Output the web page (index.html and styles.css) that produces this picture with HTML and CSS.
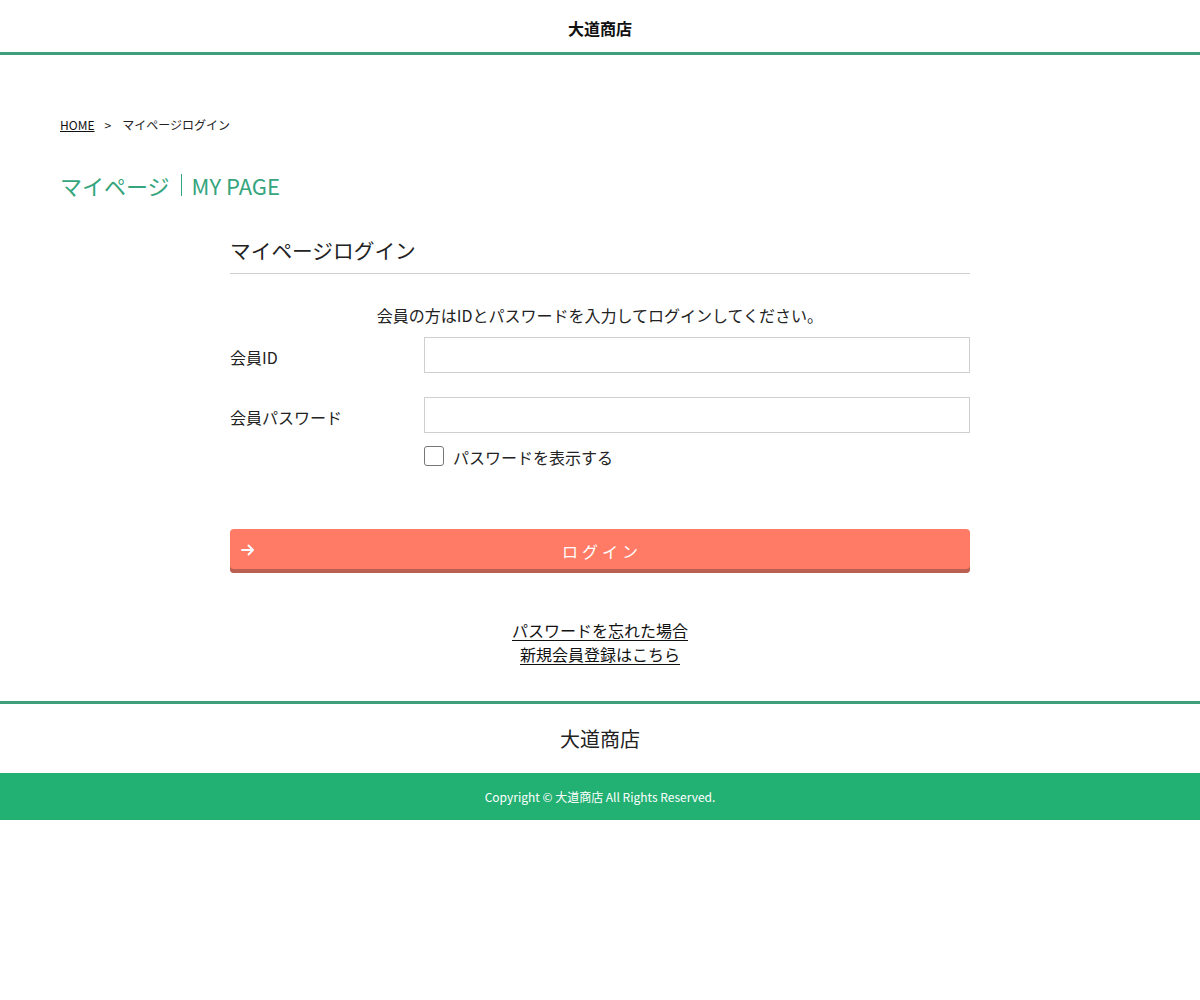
FILE: index.html
```html
<!DOCTYPE html>
<html lang="ja">
<head>
<meta charset="utf-8">
<title>マイページログイン | 大道商店</title>
<link rel="stylesheet" href="styles.css">
</head>
<body>
<header class="site-header">
  <div class="logo">大道商店</div>
</header>
<main class="main">
  <nav class="breadcrumb"><a href="#">HOME</a><span class="sep">&gt;</span><span>マイページログイン</span></nav>
  <h1 class="page-title"><span class="jp">マイページ</span><span class="bar"></span><span class="en">MY PAGE</span></h1>
  <section class="login">
    <h2 class="login-title">マイページログイン</h2>
    <p class="intro">会員の方はIDとパスワードを入力してログインしてください。</p>
    <div class="row">
      <label class="label">会員ID</label>
      <input class="field" type="text">
    </div>
    <div class="row">
      <label class="label">会員パスワード</label>
      <input class="field" type="password">
    </div>
    <div class="check-row">
      <span class="check"></span>
      <span class="check-text">パスワードを表示する</span>
    </div>
    <button class="btn" type="button">
      <svg class="arrow" width="14" height="14" viewBox="0 0 14 14"><path d="M1 7H12M7.5 2.5L12 7L7.5 11.5" fill="none" stroke="#fff" stroke-width="2" stroke-linecap="round" stroke-linejoin="round"/></svg>
      <span class="btn-text">ログイン</span>
    </button>
    <div class="links">
      <a href="#">パスワードを忘れた場合</a>
      <a href="#">新規会員登録はこちら</a>
    </div>
  </section>
</main>
<footer class="site-footer">
  <div class="footer-name">大道商店</div>
  <div class="copyright">Copyright © 大道商店 All Rights Reserved.</div>
</footer>
</body>
</html>
```
FILE: styles.css
```css
* { box-sizing: border-box; }
html, body { margin: 0; padding: 0; background: #fff; }
body {
  font-family: "Noto Sans CJK JP", "Noto Sans", sans-serif;
  color: #222;
  font-size: 16px;
}
.site-header {
  height: 55px;
  border-bottom: 3px solid #3f9f7d;
  display: flex;
  justify-content: center;
  align-items: center;
}
.logo {
  font-size: 16px;
  font-weight: 700;
  color: #111;
  padding-top: 3px;
}
.main {
  padding: 62px 60px 0;
}
.breadcrumb {
  font-size: 12px;
  line-height: 16px;
  color: #222;
  display: flex;
  align-items: center;
}
.breadcrumb a { color: #111; }
.breadcrumb .sep { margin: 0 11px 0 10px; }
.page-title {
  margin: 37px 0 0;
  font-weight: 400;
  font-size: 22px;
  line-height: 30px;
  color: #34a57d;
  display: flex;
  align-items: center;
}
.page-title .bar {
  width: 1px;
  height: 22px;
  background: #34a57d;
  margin: 0 10px 0 11px;
}
.login {
  width: 740px;
  margin: 34px auto 0;
}
.login-title {
  margin: 0;
  font-size: 20.7px;
  font-weight: 400;
  line-height: 32px;
  color: #222;
  padding-bottom: 7px;
  border-bottom: 1px solid #cfcfcf;
}
.intro {
  text-align: center;
  margin: 29px 0 0;
  line-height: 24px;
}
.row {
  display: flex;
  align-items: center;
  margin-top: 10px;
}
.row + .row { margin-top: 24px; }
.label {
  width: 194px;
  line-height: 24px;
  position: relative;
  top: 2px;
}
.field {
  flex: 1;
  height: 36px;
  border: 1px solid #cfcfcf;
  border-radius: 0;
  margin: 0;
  padding: 0 8px;
  font: inherit;
  background: #fff;
}
.check-row {
  margin: 11px 0 0 194px;
  display: flex;
  align-items: center;
}
.check {
  width: 20px;
  height: 20px;
  border: 1px solid #767676;
  border-radius: 3px;
  background: #fff;
}
.check-text {
  margin-left: 9px;
  line-height: 24px;
  position: relative;
  top: 1px;
}
.btn {
  display: flex;
  align-items: center;
  width: 100%;
  height: 44px;
  margin-top: 61px;
  border: 0;
  border-radius: 4px;
  background: #ff7b66;
  box-shadow: inset 0 -4px 0 #b96050;
  padding: 0 0 0 11px;
  font: inherit;
  color: #fff;
  cursor: pointer;
}
.arrow { flex: none; margin-top: -2px; }
.btn-text {
  flex: 1;
  text-align: center;
  letter-spacing: 4px;
  margin-left: -21px;
  font-size: 16px;
  padding-top: 0;
  color: #fff;
}
.links {
  margin-top: 45px;
  display: flex;
  flex-direction: column;
  align-items: center;
  line-height: 24px;
}
.links a { color: #111; text-decoration: underline; text-underline-offset: 3px; }
.site-footer {
  margin-top: 35px;
  border-top: 3px solid #3f9f7d;
}
.footer-name {
  text-align: center;
  font-size: 20px;
  line-height: 30px;
  padding: 20px 0 19px;
  color: #222;
}
.copyright {
  background: #22b073;
  color: #fff;
  text-align: center;
  font-size: 12px;
  height: 47px;
  line-height: 47px;
}
```
